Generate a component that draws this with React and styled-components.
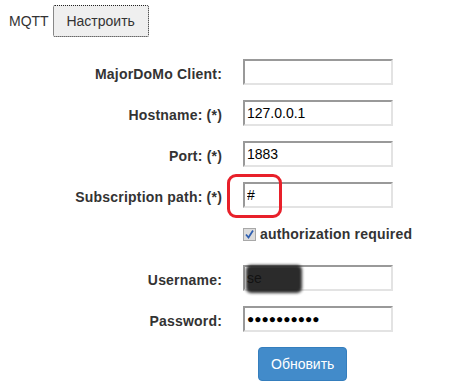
import React from 'react';
import styled, { createGlobalStyle } from 'styled-components';

const GlobalStyle = createGlobalStyle`
  html, body {
    margin: 0;
    padding: 0;
    background: #fff;
  }
  body {
    font-family: "Liberation Sans", Arial, sans-serif;
    font-size: 14px;
    color: #333;
  }
`;

const Page = styled.div`
  width: 449px;
  height: 387px;
  overflow: hidden;
`;

const TopBar = styled.div`
  display: flex;
  align-items: center;
  gap: 4px;
  padding: 5px 0 0 9px;
  font-size: 14px;
  color: #333;
`;

const SetupButton = styled.button`
  width: 96px;
  height: 32px;
  padding: 0;
  font-family: "Liberation Sans", Arial, sans-serif;
  font-size: 14px;
  color: #333;
  background: #efefef;
  border: 1px dotted #222;
  border-radius: 2px;
`;

const Form = styled.div`
  display: grid;
  grid-template-columns: 222px 150px;
  column-gap: 21px;
  row-gap: 15px;
  margin-top: 22px;
`;

const Label = styled.div`
  text-align: right;
  font-weight: bold;
  font-size: 14px;
  line-height: 20px;
  padding-top: 5px;
  letter-spacing: 0.2px;
  color: #333;
  white-space: nowrap;
`;

const Field = styled.div`
  position: relative;
  height: 26px;
`;

const TextInput = styled.input`
  box-sizing: border-box;
  width: 150px;
  height: 26px;
  margin: 0;
  padding: 0 2px;
  font-family: "Liberation Sans", Arial, sans-serif;
  font-size: ${(p) => (p.$masked ? '12px' : '14px')};
  color: #000;
  background: #fff;
  border-style: solid;
  border-width: 2px;
  border-color: #999 #e3e3e3 #e3e3e3 #999;
  outline: none;
`;

const Highlight = styled.div`
  position: absolute;
  left: -16px;
  top: -8px;
  width: 49px;
  height: 38px;
  border: 3px solid #e8202a;
  border-radius: 9px;
  pointer-events: none;
`;

const Scribble = styled.div`
  position: absolute;
  left: 3px;
  top: 0px;
  width: 56px;
  height: 28px;
  background: #151515;
  border-radius: 5px;
  filter: blur(1.6px);
  opacity: 0.9;
  pointer-events: none;
`;

const CheckRow = styled.div`
  grid-column: 2;
  display: flex;
  align-items: center;
  gap: 4px;
  height: 27px;
  padding-bottom: 5px;
  box-sizing: border-box;
  font-weight: bold;
  font-size: 14px;
  letter-spacing: 0.2px;
  color: #333;
  white-space: nowrap;
`;

const Box = styled.span`
  box-sizing: border-box;
  display: inline-flex;
  align-items: center;
  justify-content: center;
  width: 13px;
  height: 13px;
  background: #dcdcdc;
  border: 1px solid #a8a8a8;
`;

const Spacer = styled.div``;

const SubmitCell = styled.div`
  padding-left: 15px;
`;

const PrimaryButton = styled.button`
  height: 34px;
  padding: 6px 12px;
  font-family: "Liberation Sans", Arial, sans-serif;
  font-size: 14px;
  line-height: 20px;
  color: #fff;
  background: #428bca;
  border: 1px solid #357ebd;
  border-radius: 4px;
`;

const Row = ({ label, children }) => (
  <>
    <Label>{label}</Label>
    <Field>{children}</Field>
  </>
);

export default function App() {
  return (
    <Page>
      <GlobalStyle />
      <TopBar>
        <span>MQTT</span>
        <SetupButton>Настроить</SetupButton>
      </TopBar>
      <Form>
        <Row label="MajorDoMo Client:">
          <TextInput defaultValue="" />
        </Row>
        <Row label="Hostname: (*)">
          <TextInput defaultValue="127.0.0.1" />
        </Row>
        <Row label="Port: (*)">
          <TextInput defaultValue="1883" />
        </Row>
        <Row label="Subscription path: (*)">
          <TextInput defaultValue="#" />
          <Highlight />
        </Row>
        <CheckRow>
          <Box>
            <svg width="11" height="11" viewBox="0 0 11 11">
              <path d="M2 5.5 L4.5 8.5 L9 1.5" fill="none" stroke="#2f5fb0" strokeWidth="1.8" />
            </svg>
          </Box>
          authorization required
        </CheckRow>
        <Row label="Username:">
          <TextInput defaultValue="se" />
          <Scribble />
        </Row>
        <Row label="Password:">
          <TextInput $masked readOnly value="●●●●●●●●●●" />
        </Row>
        <Spacer />
        <SubmitCell>
          <PrimaryButton>Обновить</PrimaryButton>
        </SubmitCell>
      </Form>
    </Page>
  );
}
